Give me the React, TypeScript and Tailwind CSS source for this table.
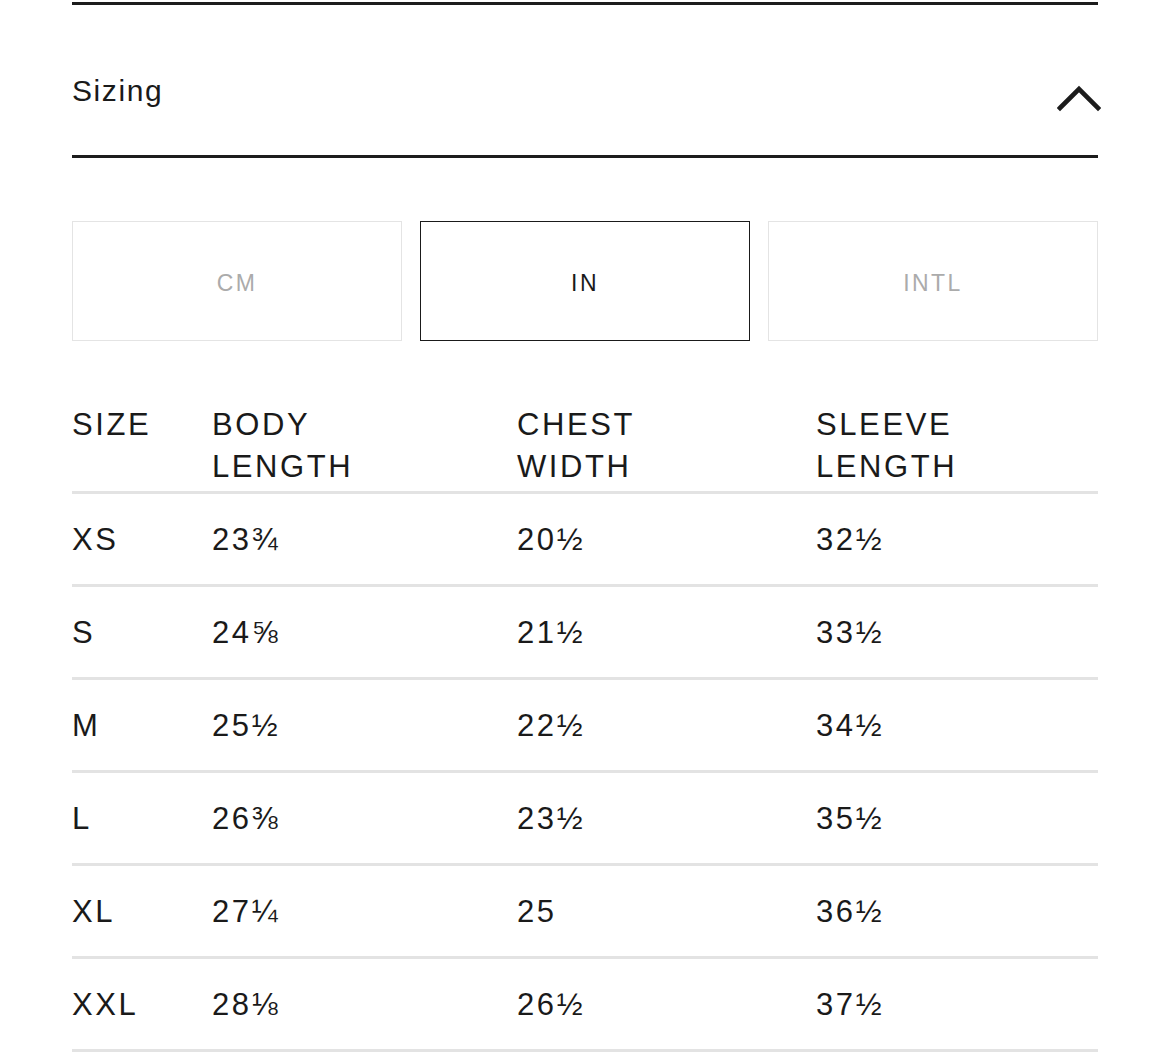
const rows = [
  { size: "XS", body: "23¾", chest: "20½", sleeve: "32½" },
  { size: "S", body: "24⅝", chest: "21½", sleeve: "33½" },
  { size: "M", body: "25½", chest: "22½", sleeve: "34½" },
  { size: "L", body: "26⅜", chest: "23½", sleeve: "35½" },
  { size: "XL", body: "27¼", chest: "25", sleeve: "36½" },
  { size: "XXL", body: "28⅛", chest: "26½", sleeve: "37½" },
]

const units = ["CM", "IN", "INTL"]

function ChevronUp() {
  return (
    <svg width="44" height="28" viewBox="0 0 44 28" className="mt-[79px] -mr-[3px] block shrink-0">
      <path d="M3 24 L22 5 L41 24" fill="none" stroke="#1c1c1c" strokeWidth="4.6" strokeLinecap="square" />
    </svg>
  )
}

export default function App() {
  return (
    <div
      className="min-h-[1060px] bg-white px-[72px] pt-[2px] text-[#1a1a1a]"
      style={{ fontFamily: '"Liberation Sans", Arial, sans-serif' }}
    >
      <div className="border-t-[3px] border-[#1c1c1c]" />

      <div className="flex h-[150px] items-start justify-between">
        <h2 className="mt-[71px] text-[30px] leading-[30px] tracking-[1.6px]">Sizing</h2>
        <ChevronUp />
      </div>

      <div className="border-t-[3px] border-[#1c1c1c]" />

      <div className="mt-[63px] grid grid-cols-3 gap-[18px]">
        {units.map((u) => {
          const active = u === "IN"
          return (
            <button
              key={u}
              className={
                active
                  ? "flex h-[120px] items-center justify-center border border-[#1a1a1a] pt-[4px] text-[23px] tracking-[2.4px] text-[#1a1a1a]"
                  : "flex h-[120px] items-center justify-center border border-[#e4e4e4] pt-[4px] text-[23px] tracking-[2.4px] text-[#ababab]"
              }
            >
              {u}
            </button>
          )
        })}
      </div>

      <div className="mt-[63px] grid grid-cols-[140px_305px_299px_1fr] border-b-[3px] border-[#e3e3e3] pb-[3px] text-[31px] leading-[42px] tracking-[2.6px]">
        <div>SIZE</div>
        <div>
          BODY
          <br />
          LENGTH
        </div>
        <div>
          CHEST
          <br />
          WIDTH
        </div>
        <div>
          SLEEVE
          <br />
          LENGTH
        </div>
      </div>

      {rows.map((r) => (
        <div
          key={r.size}
          className="grid h-[93px] grid-cols-[140px_305px_299px_1fr] items-center border-b-[3px] border-[#e3e3e3] pt-[2px] text-[31px] leading-[42px] tracking-[2.6px]"
        >
          <div>{r.size}</div>
          <div>{r.body}</div>
          <div>{r.chest}</div>
          <div>{r.sleeve}</div>
        </div>
      ))}
    </div>
  )
}
